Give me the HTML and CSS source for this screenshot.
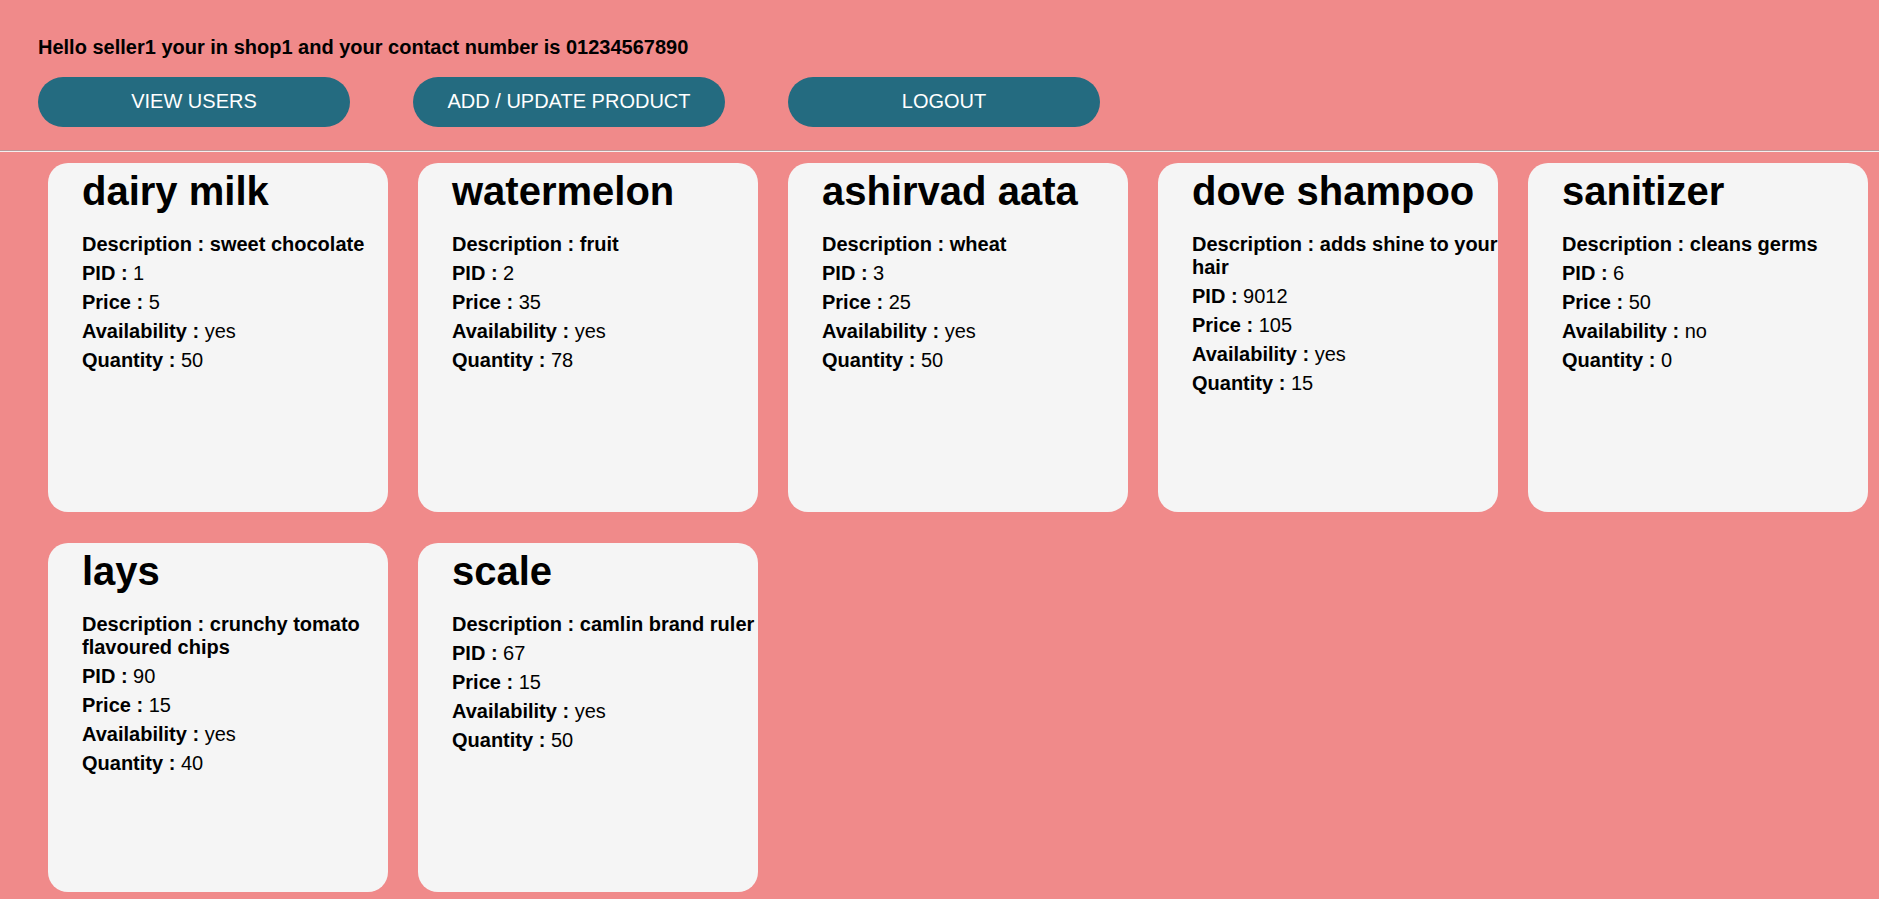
FILE: index.html
```html
<!DOCTYPE html>
<html lang="en">
<head>
<meta charset="utf-8">
<title>Seller dashboard</title>
<link rel="stylesheet" href="styles.css">
</head>
<body>
<header class="topbar">
  <p class="greeting">Hello seller1 your in shop1 and your contact number is 01234567890</p>
  <nav class="actions">
    <button class="btn">VIEW USERS</button>
    <button class="btn">ADD / UPDATE PRODUCT</button>
    <button class="btn">LOGOUT</button>
  </nav>
</header>
<hr class="divider">
<main class="products">
  <article class="card">
    <h1 class="title">dairy milk</h1>
    <p class="row desc">Description : sweet chocolate</p>
    <p class="row"><b>PID :</b> 1</p>
    <p class="row"><b>Price :</b> 5</p>
    <p class="row"><b>Availability :</b> yes</p>
    <p class="row"><b>Quantity :</b> 50</p>
  </article>
  <article class="card">
    <h1 class="title">watermelon</h1>
    <p class="row desc">Description : fruit</p>
    <p class="row"><b>PID :</b> 2</p>
    <p class="row"><b>Price :</b> 35</p>
    <p class="row"><b>Availability :</b> yes</p>
    <p class="row"><b>Quantity :</b> 78</p>
  </article>
  <article class="card">
    <h1 class="title">ashirvad aata</h1>
    <p class="row desc">Description : wheat</p>
    <p class="row"><b>PID :</b> 3</p>
    <p class="row"><b>Price :</b> 25</p>
    <p class="row"><b>Availability :</b> yes</p>
    <p class="row"><b>Quantity :</b> 50</p>
  </article>
  <article class="card">
    <h1 class="title">dove shampoo</h1>
    <p class="row desc">Description : adds shine to your hair</p>
    <p class="row"><b>PID :</b> 9012</p>
    <p class="row"><b>Price :</b> 105</p>
    <p class="row"><b>Availability :</b> yes</p>
    <p class="row"><b>Quantity :</b> 15</p>
  </article>
  <article class="card">
    <h1 class="title">sanitizer</h1>
    <p class="row desc">Description : cleans germs</p>
    <p class="row"><b>PID :</b> 6</p>
    <p class="row"><b>Price :</b> 50</p>
    <p class="row"><b>Availability :</b> no</p>
    <p class="row"><b>Quantity :</b> 0</p>
  </article>
  <article class="card">
    <h1 class="title">lays</h1>
    <p class="row desc">Description : crunchy tomato flavoured chips</p>
    <p class="row"><b>PID :</b> 90</p>
    <p class="row"><b>Price :</b> 15</p>
    <p class="row"><b>Availability :</b> yes</p>
    <p class="row"><b>Quantity :</b> 40</p>
  </article>
  <article class="card">
    <h1 class="title">scale</h1>
    <p class="row desc">Description : camlin brand ruler</p>
    <p class="row"><b>PID :</b> 67</p>
    <p class="row"><b>Price :</b> 15</p>
    <p class="row"><b>Availability :</b> yes</p>
    <p class="row"><b>Quantity :</b> 50</p>
  </article>
</main>
</body>
</html>
```
FILE: styles.css
```css
html, body {
  margin: 0;
  padding: 0;
}

body {
  background: #f08a8a;
  font-family: "Liberation Sans", Arial, sans-serif;
  color: #000;
  overflow: hidden;
}

.topbar {
  padding: 36px 0 23px 38px;
}

.greeting {
  margin: 0;
  font-size: 20px;
  font-weight: bold;
  line-height: 23px;
}

.actions {
  display: flex;
  gap: 63px;
  margin-top: 18px;
}

.btn {
  width: 312px;
  height: 50px;
  border: none;
  border-radius: 25px;
  background: #246b80;
  color: #fff;
  font-family: "Liberation Sans", Arial, sans-serif;
  font-size: 20px;
  padding: 0 0 2px;
  cursor: pointer;
}

.divider {
  margin: 0;
  height: 0;
  border: none;
  border-top: 1px solid #b99898;
  border-bottom: 1px solid #f4eeee;
}

.products {
  display: grid;
  grid-template-columns: repeat(5, 340px);
  grid-auto-rows: 349px;
  column-gap: 30px;
  row-gap: 31px;
  padding: 11px 0 0 48px;
}

.card {
  background: #f5f5f5;
  border-radius: 20px;
  padding: 5px 0 0 34px;
}

.title {
  margin: 0 0 19px;
  font-size: 40px;
  font-weight: bold;
  line-height: 46px;
}

.row {
  margin: 0 0 6px;
  font-size: 20px;
  line-height: 23px;
}

.desc {
  font-weight: bold;
}
```
